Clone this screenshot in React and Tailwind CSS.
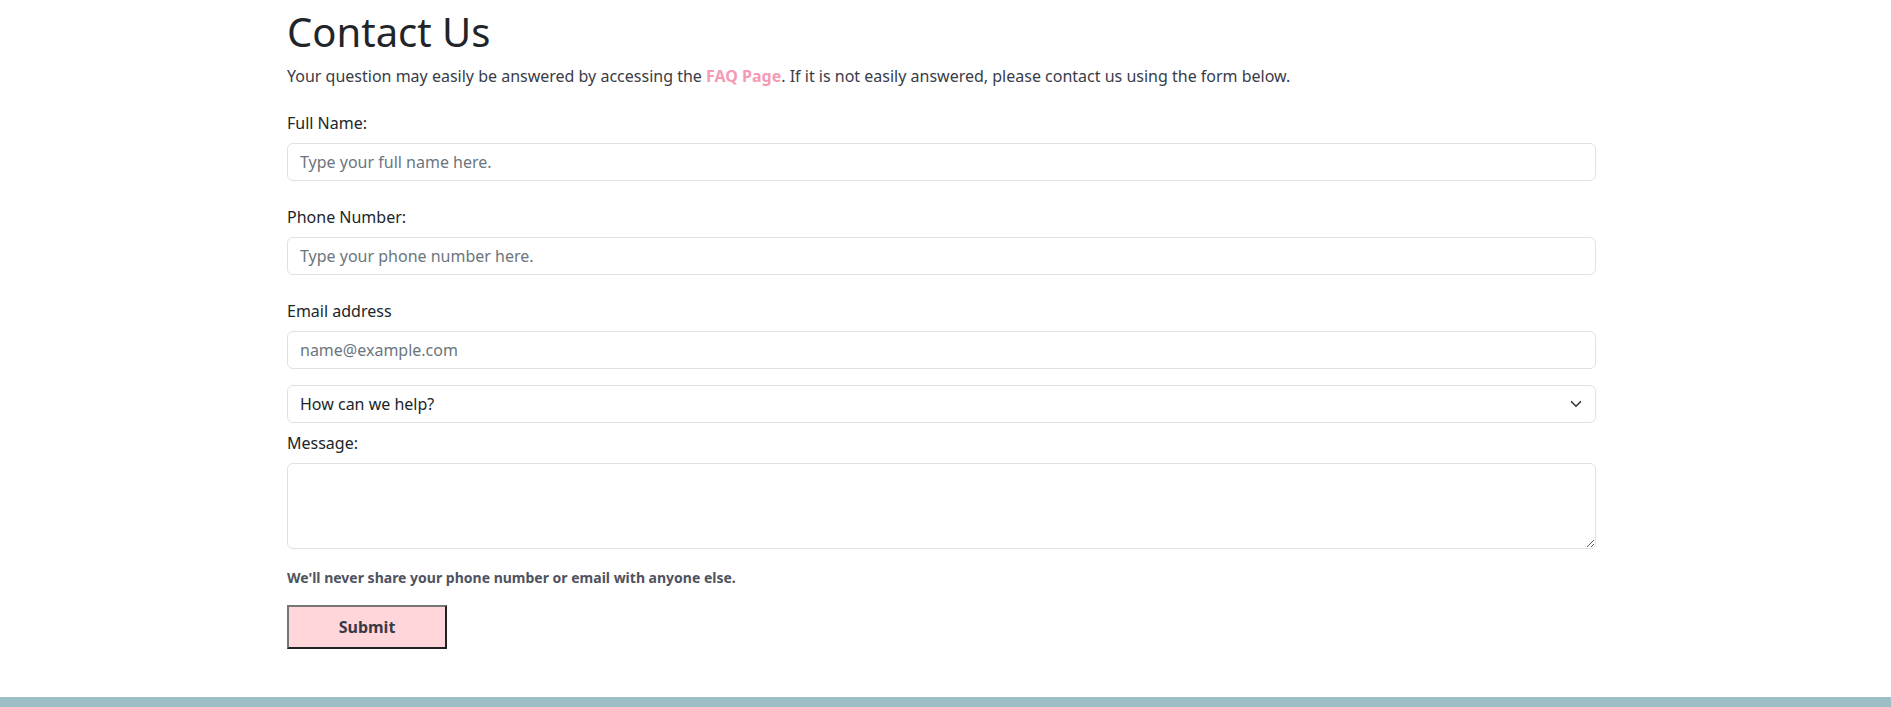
import React from "react";

const inputCls =
  "block w-full h-[38px] px-3 text-base text-[#212529] bg-white border border-[#dee2e6] rounded-[6px] placeholder:text-[#6c757d] outline-none";

export default function App() {
  return (
    <div className="min-h-[707px] flex flex-col bg-white text-[#212529] font-['Noto_Sans',sans-serif]">
      <main className="flex-1 pl-[287px] pt-[8px]">
        <div className="w-[1309px]">
          <h1 className="text-[40px] leading-[48px] font-normal mb-2">Contact Us</h1>
          <p className="text-base leading-6 text-[#393c48]">
            Your question may easily be answered by accessing the{" "}
            <a href="#" className="font-bold text-[#f49ab5]">FAQ Page</a>. If it is not easily answered, please
            contact us using the form below.
          </p>

          <form className="mt-[23px]" onSubmit={(e) => e.preventDefault()}>
            <label className="block text-base leading-6 mb-2">Full Name:</label>
            <input type="text" placeholder="Type your full name here." className={inputCls} />

            <label className="block text-base leading-6 mb-2 mt-6">Phone Number:</label>
            <input type="tel" placeholder="Type your phone number here." className={inputCls} />

            <label className="block text-base leading-6 mb-2 mt-6">Email address</label>
            <input type="email" placeholder="name@example.com" className={inputCls} />

            <div className="relative mt-4">
              <select className={inputCls + " appearance-none pr-10"} defaultValue="">
                <option value="">How can we help?</option>
                <option>General question</option>
                <option>Order support</option>
              </select>
              <svg
                className="absolute right-[14px] top-1/2 -translate-y-1/2 pointer-events-none"
                width="12"
                height="12"
                viewBox="0 0 16 16"
                fill="none"
                stroke="#343a40"
                strokeWidth="2.2"
                strokeLinecap="round"
                strokeLinejoin="round"
              >
                <path d="m2 5 6 6 6-6" />
              </svg>
            </div>

            <label className="block text-base leading-6 mb-2 mt-2">Message:</label>
            <textarea
              rows={3}
              className="block w-full h-[86px] px-3 py-1.5 text-base text-[#212529] bg-white border border-[#dee2e6] rounded-[6px] outline-none"
            />

            <p className="mt-[18px] text-sm leading-[21px] font-bold text-[#4f5360]">
              We'll never share your phone number or email with anyone else.
            </p>

            <button
              type="submit"
              className="mt-[17px] w-[160px] h-[44px] bg-[#ffd6d9] text-[#3a3a46] font-bold text-base border-2 border-t-[#767676] border-l-[#767676] border-b-[#222] border-r-[#222]"
            >
              Submit
            </button>
          </form>
        </div>
      </main>
      <footer className="h-[10px] bg-[#9cbec7]" />
    </div>
  );
}
